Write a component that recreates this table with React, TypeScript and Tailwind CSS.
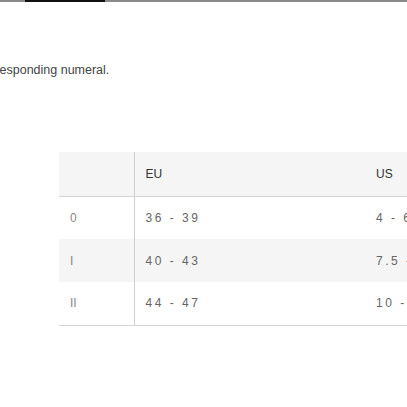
const rows = [
  { label: "0", eu: "36 - 39", us: "4 - 6" },
  { label: "I", eu: "40 - 43", us: "7.5 - 9" },
  { label: "II", eu: "44 - 47", us: "10 - 12" },
];

export default function App() {
  return (
    <div className="h-[407px] w-[407px] overflow-hidden bg-white font-['Liberation_Sans',Arial,sans-serif]">
      <div className="flex h-[2px]">
        <div className="w-[25px] bg-[#8a8a8a]" />
        <div className="w-[80px] bg-[#111]" />
        <div className="flex-1 bg-[#8a8a8a]" />
      </div>
      <p className="ml-[-22px] mt-[61px] whitespace-nowrap text-[12.5px] leading-[14px] text-[#444]">
        corresponding numeral.
      </p>
      <div className="ml-[59px] mt-[75px] w-[420px]">
        <table className="w-full border-collapse text-left text-[12px]">
          <thead>
            <tr className="h-[44px] bg-[#f5f5f5]">
              <th className="w-[75px] border-b border-[#d4d4d4] border-r border-r-[#cfcfcf]" />
              <th className="w-[231px] border-b border-[#d4d4d4] pl-[11px] font-normal text-[#333]">EU</th>
              <th className="border-b border-[#d4d4d4] pl-[11px] font-normal text-[#333]">US</th>
            </tr>
          </thead>
          <tbody>
            {rows.map((r, i) => (
              <tr key={r.label} className={`h-[43px] ${i === 1 ? "bg-[#f5f5f5]" : "bg-white"}`}>
                <td className={`border-r border-[#cfcfcf] pl-[11px] text-[#888] ${i === 2 ? "border-b border-b-[#d4d4d4]" : ""}`}>
                  {r.label}
                </td>
                <td className={`pl-[11px] tracking-[2.5px] text-[#666] ${i === 2 ? "border-b border-[#d4d4d4]" : ""}`}>{r.eu}</td>
                <td className={`pl-[11px] tracking-[2.5px] text-[#666] ${i === 2 ? "border-b border-[#d4d4d4]" : ""}`}>{r.us}</td>
              </tr>
            ))}
          </tbody>
        </table>
      </div>
    </div>
  );
}
